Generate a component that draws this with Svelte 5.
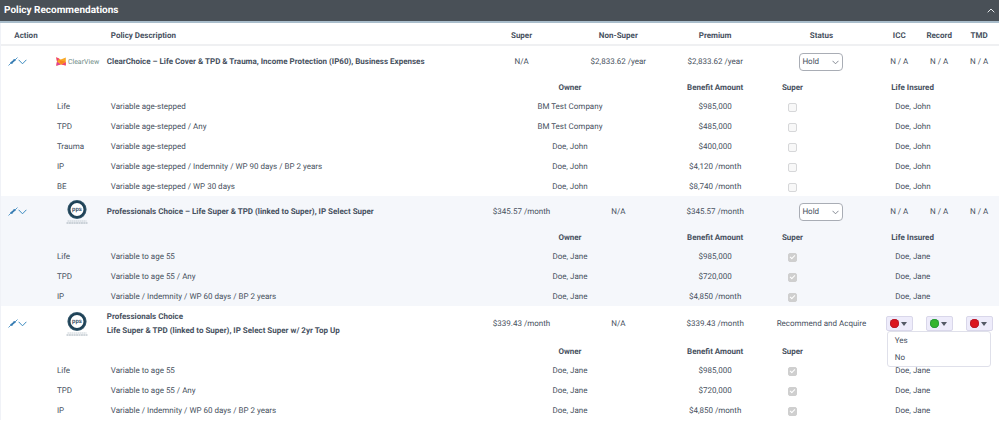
<script>
  const COLUMNS = [
    { label: 'Super' },
    { label: 'Non-Super' },
    { label: 'Premium' },
    { label: 'Status', span: 2 },
    { label: 'ICC' },
    { label: 'Record' },
    { label: 'TMD' },
  ];

  const FLAGS = ['ICC', 'Record', 'TMD'];

  let expanded = $state(true);
  let openMenu = $state('2-ICC');

  let policies = $state([
    {
      logo: 'clearview',
      title: ['ClearChoice – Life Cover & TPD & Trauma, Income Protection (IP60), Business Expenses'],
      super: 'N/A',
      nonSuper: '$2,833.62 /year',
      premium: '$2,833.62 /year',
      status: 'Hold',
      flags: null,
      insured: 'Doe, John',
      covers: [
        { type: 'Life',   desc: 'Variable age-stepped', owner: 'BM Test Company', amount: '$985,000', inSuper: false },
        { type: 'TPD',    desc: 'Variable age-stepped / Any', owner: 'BM Test Company', amount: '$485,000', inSuper: false },
        { type: 'Trauma', desc: 'Variable age-stepped', owner: 'Doe, John', amount: '$400,000', inSuper: false },
        { type: 'IP',     desc: 'Variable age-stepped / Indemnity / WP 90 days / BP 2 years', owner: 'Doe, John', amount: '$4,120 /month', inSuper: false },
        { type: 'BE',     desc: 'Variable age-stepped / WP 30 days', owner: 'Doe, John', amount: '$8,740 /month', inSuper: false },
      ],
    },
    {
      logo: 'pps',
      title: ['Professionals Choice – Life Super & TPD (linked to Super), IP Select Super'],
      super: '$345.57 /month',
      nonSuper: 'N/A',
      premium: '$345.57 /month',
      status: 'Hold',
      flags: null,
      insured: 'Doe, Jane',
      covers: [
        { type: 'Life', desc: 'Variable to age 55', owner: 'Doe, Jane', amount: '$985,000', inSuper: true },
        { type: 'TPD',  desc: 'Variable to age 55 / Any', owner: 'Doe, Jane', amount: '$720,000', inSuper: true },
        { type: 'IP',   desc: 'Variable / Indemnity / WP 60 days / BP 2 years', owner: 'Doe, Jane', amount: '$4,850 /month', inSuper: true },
      ],
    },
    {
      logo: 'pps',
      title: ['Professionals Choice', 'Life Super & TPD (linked to Super), IP Select Super w/ 2yr Top Up'],
      super: '$339.43 /month',
      nonSuper: 'N/A',
      premium: '$339.43 /month',
      status: 'Recommend and Acquire',
      flags: { ICC: false, Record: true, TMD: false },
      insured: 'Doe, Jane',
      covers: [
        { type: 'Life', desc: 'Variable to age 55', owner: 'Doe, Jane', amount: '$985,000', inSuper: true },
        { type: 'TPD',  desc: 'Variable to age 55 / Any', owner: 'Doe, Jane', amount: '$720,000', inSuper: true },
        { type: 'IP',   desc: 'Variable / Indemnity / WP 60 days / BP 2 years', owner: 'Doe, Jane', amount: '$4,850 /month', inSuper: true },
      ],
    },
  ]);

  function toggleMenu(id) {
    openMenu = openMenu === id ? '' : id;
  }

  function setFlag(policy, flag, value) {
    policy.flags[flag] = value;
    openMenu = '';
  }
</script>

<header class="bar">
  <h2>Policy Recommendations</h2>
  <button class="collapse" aria-label="Toggle policy recommendations" onclick={() => (expanded = !expanded)}>
    <svg width="8" height="5" viewBox="0 0 8 5"><path d="M0.7 4.3 4 1l3.3 3.3" fill="none" stroke="#e4e8eb" stroke-width="1" /></svg>
  </button>
</header>

{#if expanded}
  <table>
    <colgroup>
      <col class="c-action" />
      <col class="c-logo" />
      <col class="c-desc" />
      <col class="c-money" />
      <col class="c-money" />
      <col class="c-money" />
      <col class="c-status" />
      <col class="c-status" />
      <col class="c-flag" />
      <col class="c-flag" />
      <col class="c-flag" />
    </colgroup>
    <thead>
      <tr>
        <th>Action</th>
        <td></td>
        <th class="left indent">Policy Description</th>
        {#each COLUMNS as c}
          <th colspan={c.span ?? 1}>{c.label}</th>
        {/each}
      </tr>
    </thead>
    {#each policies as p, i}
      <tbody>
        <tr class="policy" class:tall={p.title.length > 1}>
          <td class="left">
            <div class="actions">
              <button aria-label="Unlink policy">
                <svg width="10" height="9" viewBox="0 0 10 9">
                  <path d="M0.5 8.5 3 6M7 3l2.5-2.5" stroke="#5a9ccc" stroke-width="1" />
                  <path d="M2.8 6.2 7.2 2.6" stroke="#3379b0" stroke-width="1.8" />
                  <path d="M2.6 5 4.6 7M5.4 2 7.4 4" stroke="#3c82b8" stroke-width="0.7" />
                </svg>
              </button>
              <button aria-label="Show policy details">
                <svg width="9" height="6" viewBox="0 0 9 6"><path d="M0.6 0.8 4.5 4.8l3.9-4" fill="none" stroke="#3b8abf" stroke-width="1" /></svg>
              </button>
            </div>
          </td>
          <td class="logo">
            {#if p.logo === 'clearview'}
              <div class="clearview">
                <svg width="10" height="9" viewBox="0 0 10 9">
                  <path d="M0.2 0.2 4.8 2.4 9.8 0.4V8.6L4.8 7.4 0.2 8.8 1 4.6z" fill="#f9a825" />
                  <path d="M0.2 0.2 3.4 1.7 1 4.6z" fill="#ee3f7d" />
                  <path d="M1 4.6 4.8 7.4 0.2 8.8z" fill="#e0409a" />
                  <path d="M9.8 8.6V5L5.4 7.5z" fill="#ee3f7d" />
                  <path d="M3.2 3.2 9.4 4.6 4.8 7.4z" fill="#f6871f" />
                </svg>
                <span>ClearView</span>
              </div>
            {:else}
              <svg width="24" height="25" viewBox="0 0 24 25" role="img" aria-label="PPS">
                <circle cx="12" cy="10.5" r="8" fill="#fff" stroke="#1f4257" stroke-width="3" />
                <circle cx="12" cy="10.5" r="9.1" fill="none" stroke="#7594a5" stroke-width="0.3" />
                <text x="12" y="12.3" class="mark" text-anchor="middle">pps</text>
                <path d="M2.5 22h19" stroke="#b9c3ca" stroke-width="0.8" stroke-dasharray="1.6 0.4" />
                <path d="M1.5 24h21" stroke="#8b9ba6" stroke-width="0.8" stroke-dasharray="2 0.4" />
              </svg>
            {/if}
          </td>
          <td class="left title">
            {#each p.title as line}<div>{line}</div>{/each}
          </td>
          <td>{p.super}</td>
          <td>{p.nonSuper}</td>
          <td>{p.premium}</td>
          <td colspan="2">
            {#if p.flags}
              {p.status}
            {:else}
              <div class="select">
                <select aria-label="Status" bind:value={p.status}>
                  <option>Hold</option>
                  <option>Recommend and Acquire</option>
                </select>
                <svg width="7" height="5" viewBox="0 0 7 5"><path d="M0.5 0.8 3.5 3.8l3-3" fill="none" stroke="#777e88" stroke-width="0.9" /></svg>
              </div>
            {/if}
          </td>
          {#each FLAGS as flag}
            <td>
              {#if p.flags}
                <div class="flag">
                  <button class="flag-button" aria-label={flag} onclick={() => toggleMenu(`${i}-${flag}`)}>
                    <span class="dot" class:yes={p.flags[flag]}></span>
                    <svg width="6" height="4" viewBox="0 0 6 4"><path d="M0 0h6L3 4z" fill="#555a66" /></svg>
                  </button>
                  {#if openMenu === `${i}-${flag}`}
                    <div class="menu">
                      <button onclick={() => setFlag(p, flag, true)}>Yes</button>
                      <button onclick={() => setFlag(p, flag, false)}>No</button>
                    </div>
                  {/if}
                </div>
              {:else}
                N / A
              {/if}
            </td>
          {/each}
        </tr>
        <tr class="sub">
          <td colspan="3"></td>
          <th colspan="2">Owner</th>
          <th>Benefit Amount</th>
          <th>Super</th>
          <td></td>
          <th colspan="3" class="left insured-head">{openMenu.startsWith(`${i}-`) ? '' : 'Life Insured'}</th>
        </tr>
        {#each p.covers as c}
          <tr class="cover">
            <td></td>
            <td class="left type">{c.type}</td>
            <td class="left indent">{c.desc}</td>
            <td colspan="2">{c.owner}</td>
            <td>{c.amount}</td>
            <td><input type="checkbox" aria-label="{c.type} in super" checked={c.inSuper} disabled /></td>
            <td></td>
            <td colspan="3" class="left insured">{p.insured}</td>
          </tr>
        {/each}
      </tbody>
    {/each}
  </table>
{/if}

<style>
  :global(body) { background: #fff; font-family: Roboto, "Liberation Sans", sans-serif; font-size: 8px; line-height: 10px; color: #475160; text-rendering: geometricPrecision; }
  button, select { font: inherit; color: inherit; text-rendering: inherit; }
  button { padding: 0; border: none; background: none; cursor: pointer; }
  svg { display: block; }

  .bar { display: flex; align-items: center; justify-content: space-between; height: 21px; padding: 0 4px; background: #495057; border-bottom: 2px solid #a9bdcb; }
  h2 { margin: 0; font-size: 10px; line-height: 12px; font-weight: 700; color: #fff; }

  table { width: 100%; table-layout: fixed; border-collapse: separate; border-spacing: 0; border-left: 1px solid #f0f2f7; }
  th, td { padding: 0; text-align: center; vertical-align: middle; }
  th { font-weight: 700; }
  thead th, thead td { height: 17px; padding-top: 4px; border-bottom: 2px solid #eff0f2; }
  .left { text-align: left; }

  .c-action { width: 5%; }
  .c-logo { width: 5.2%; }
  .c-money { width: 9.7%; }
  .c-status { width: 5.8%; }
  .c-flag { width: 4%; }

  tbody:nth-of-type(even) { background: #f5f7fb; }
  .policy td { height: 31px; }
  .policy.tall td { height: 35px; }
  .sub th, .sub td { height: 17px; padding-top: 2px; }
  .cover td { height: 18px; padding-top: 2px; }

  .title { padding-left: 4px; font-weight: 700; }
  .tall .title { line-height: 14px; }
  .indent { padding-left: 8px; }
  .type { padding-left: 6px; }
  .insured-head { padding-left: 12px; }
  .insured { padding-left: 16px; }

  .actions { display: flex; align-items: center; padding-left: 7px; }
  .logo svg { margin: 0 auto; }
  .clearview { display: flex; align-items: center; gap: 2px; padding-left: 5px; font-size: 7px; color: #6f8c86; }
  .logo .clearview svg { margin: 0; }
  .mark { font-size: 6px; font-weight: 500; fill: #1f4257; }

  .select { position: relative; display: inline-block; vertical-align: middle; }
  .select svg { position: absolute; right: 4px; top: 7px; pointer-events: none; }
  select { display: block; appearance: none; width: 44px; height: 18px; padding: 0 12px 0 2px; border: 1px solid #a9adb5; border-radius: 4px; background: #fff; }

  input { display: block; appearance: none; width: 9px; height: 9px; margin: 0 auto; border: 1px solid #d6d7d9; border-radius: 2px; background: #f8f8f8; }
  input:checked { border-color: #cfcfcf; background: #cfcfcf; }
  input:checked::before { content: ''; display: block; width: 2px; height: 4px; margin: 0 auto; border: solid #fff; border-width: 0 1px 1px 0; transform: rotate(45deg); }

  .flag { position: relative; display: inline-block; vertical-align: middle; }
  .flag-button { display: flex; align-items: center; justify-content: space-between; width: 27px; height: 15px; padding: 0 5px 0 3px; border: 1px solid #d9d7ea; border-radius: 2px; background: #eeecfb; }
  .dot { width: 9px; height: 9px; border-radius: 50%; background: #dc1620; box-shadow: inset 0 0 0 1px #b81c2c; }
  .dot.yes { background: #35b52f; box-shadow: inset 0 0 0 1px #2a9a3c; }
  .menu { position: absolute; top: 100%; left: 1px; z-index: 1; width: 104px; box-sizing: border-box; border: 1px solid #dfe0ea; border-radius: 3px; background: #fff; }
  .menu button { display: block; width: 100%; height: 17px; padding-left: 7px; text-align: left; }
</style>
